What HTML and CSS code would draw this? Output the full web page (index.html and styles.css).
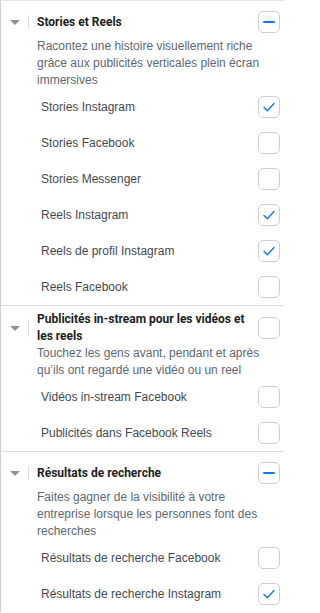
FILE: index.html
```html
<!DOCTYPE html>
<html lang="fr">
<head>
<meta charset="utf-8">
<link rel="stylesheet" href="styles.css">
</head>
<body>
<div class="panel">
  <section class="group">
    <div class="head">
      <span class="caret"></span>
      <span class="divider"></span>
      <h3 class="title">Stories et Reels</h3>
      <span class="box"><span class="minus"></span></span>
    </div>
    <p class="desc">Racontez une histoire visuellement riche grâce aux publicités verticales plein écran immersives</p>
    <ul class="items">
      <li class="item"><span class="label">Stories Instagram</span><span class="box"><svg class="check" viewBox="0 0 22 22"><path d="M5.5 11.5 L9.2 15 L16.5 7.2"/></svg></span></li>
      <li class="item"><span class="label">Stories Facebook</span><span class="box"></span></li>
      <li class="item"><span class="label">Stories Messenger</span><span class="box"></span></li>
      <li class="item"><span class="label">Reels Instagram</span><span class="box"><svg class="check" viewBox="0 0 22 22"><path d="M5.5 11.5 L9.2 15 L16.5 7.2"/></svg></span></li>
      <li class="item"><span class="label">Reels de profil Instagram</span><span class="box"><svg class="check" viewBox="0 0 22 22"><path d="M5.5 11.5 L9.2 15 L16.5 7.2"/></svg></span></li>
      <li class="item"><span class="label">Reels Facebook</span><span class="box"></span></li>
    </ul>
  </section>
  <section class="group">
    <div class="head">
      <span class="caret"></span>
      <span class="divider"></span>
      <h3 class="title">Publicités in-stream pour les vidéos et les reels</h3>
      <span class="box"></span>
    </div>
    <p class="desc">Touchez les gens avant, pendant et après qu’ils ont regardé une vidéo ou un reel</p>
    <ul class="items">
      <li class="item"><span class="label">Vidéos in-stream Facebook</span><span class="box"></span></li>
      <li class="item"><span class="label">Publicités dans Facebook Reels</span><span class="box"></span></li>
    </ul>
  </section>
  <section class="group">
    <div class="head">
      <span class="caret"></span>
      <span class="divider"></span>
      <h3 class="title">Résultats de recherche</h3>
      <span class="box"><span class="minus"></span></span>
    </div>
    <p class="desc">Faites gagner de la visibilité à votre entreprise lorsque les personnes font des recherches</p>
    <ul class="items">
      <li class="item"><span class="label">Résultats de recherche Facebook</span><span class="box"></span></li>
      <li class="item"><span class="label">Résultats de recherche Instagram</span><span class="box"><svg class="check" viewBox="0 0 22 22"><path d="M5.5 11.5 L9.2 15 L16.5 7.2"/></svg></span></li>
    </ul>
  </section>
</div>
</body>
</html>
```

FILE: styles.css
```css
* { box-sizing: border-box; }
html, body { margin: 0; padding: 0; background: #fff; }
body {
  font-family: "Liberation Sans", Arial, sans-serif;
  color: #1c1e21;
  width: 285px;
  overflow: hidden;
}
.panel {
  border-left: 1px solid #ccd0d5;
  border-top: 1px solid #e4e6eb;
}
.group {
  padding-top: 5px;
  border-bottom: 1px solid #dadde1;
}
.group:last-child { border-bottom: 0; }
.head {
  display: flex;
  align-items: center;
  min-height: 32px;
  padding-right: 5px;
}
.caret {
  width: 0;
  height: 0;
  margin-left: 9px;
  border-left: 5px solid transparent;
  border-right: 5px solid transparent;
  border-top: 5px solid #8d949e;
  flex: none;
}
.divider {
  width: 1px;
  height: 14px;
  background: #dadde1;
  margin-left: 8px;
  flex: none;
}
.title {
  margin: 0 0 0 8px;
  flex: 1;
  font-family: Roboto, "Liberation Sans", sans-serif;
  font-weight: 700;
  font-size: 12px;
  line-height: 17px;
  color: #1c1e21;
  padding-right: 8px;
}
.box {
  flex: none;
  width: 22px;
  height: 22px;
  border: 1px solid #ccd0d5;
  border-radius: 5px;
  display: flex;
  align-items: center;
  justify-content: center;
  background: #fff;
}
.minus {
  width: 12px;
  height: 2px;
  background: #1877f2;
  border-radius: 1px;
}
.check {
  width: 20px;
  height: 20px;
  fill: none;
  stroke: #1877f2;
  stroke-width: 1.6;
  stroke-linecap: round;
  stroke-linejoin: round;
}
.desc {
  margin: 0;
  padding: 0 22px 0 36px;
  font-size: 12px;
  line-height: 17px;
  color: #606770;
}
.items {
  list-style: none;
  margin: 0;
  padding: 0;
}
.item {
  display: flex;
  align-items: center;
  justify-content: space-between;
  height: 36px;
  padding: 0 5px 0 40px;
}
.label {
  font-size: 12px;
  color: #444950;
}
```
